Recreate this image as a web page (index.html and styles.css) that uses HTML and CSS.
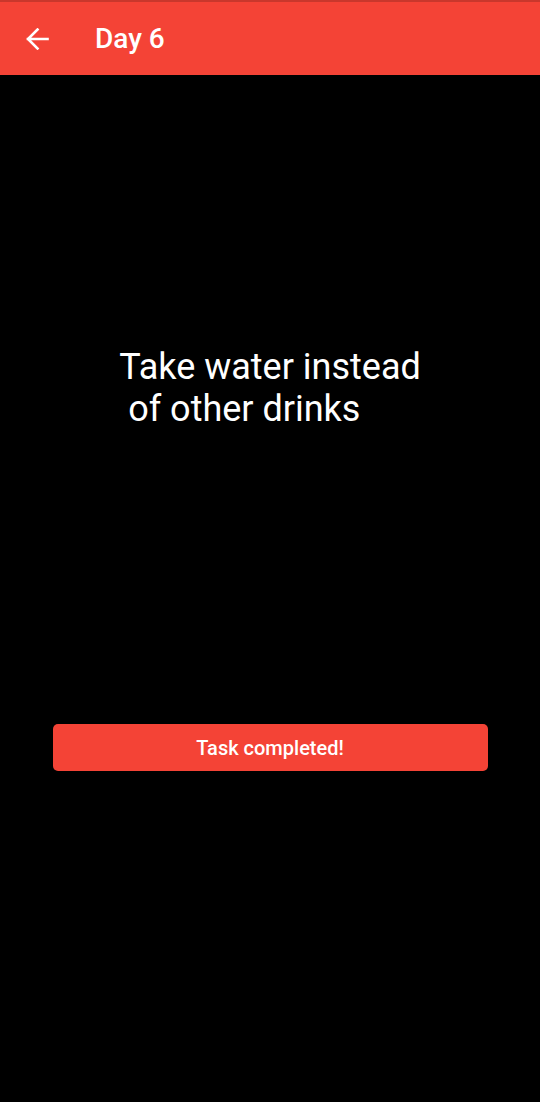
FILE: index.html
```html
<!DOCTYPE html>
<html>
<head>
<meta charset="utf-8">
<link rel="stylesheet" href="styles.css">
</head>
<body>
<div class="screen">
  <div class="statusline"></div>
  <header class="appbar">
    <span class="back">
      <svg width="24" height="22" viewBox="0 0 24 22"><path d="M22.5 11H3M12.5 1.5L3 11l9.5 9.5" fill="none" stroke="#fff" stroke-width="2.6" stroke-linecap="square"/></svg>
    </span>
    <h1 class="title">Day 6</h1>
  </header>
  <main class="content">
    <p class="task">Take water instead<br>&nbsp;of other drinks</p>
    <button class="done">Task completed!</button>
  </main>
</div>
</body>
</html>
```

FILE: styles.css
```css
html, body {
  margin: 0;
  padding: 0;
  background: #000;
}
.screen {
  width: 540px;
  height: 1102px;
  background: #000;
  font-family: Roboto, "Noto Sans", sans-serif;
  display: flex;
  flex-direction: column;
}
.statusline {
  height: 2px;
  background: #c9372c;
}
.appbar {
  height: 73px;
  background: #f44336;
  display: flex;
  align-items: center;
  box-sizing: border-box;
  padding-left: 25px;
}
.back {
  display: flex;
  width: 24px;
  height: 22px;
}
.title {
  margin: 0 0 0 46px;
  color: #fff;
  font-size: 28px;
  font-weight: 500;
}
.content {
  flex: 1;
  display: flex;
  flex-direction: column;
  align-items: center;
}
.task {
  margin: 271px 0 0 0;
  color: #fff;
  font-size: 36px;
  line-height: 42px;
  text-align: left;
}
.done {
  margin-top: 294px;
  width: 435px;
  height: 47px;
  border: none;
  border-radius: 5px;
  background: #f44336;
  color: #fff;
  font-family: Roboto, "Noto Sans", sans-serif;
  font-size: 20px;
  font-weight: 500;
}
```
